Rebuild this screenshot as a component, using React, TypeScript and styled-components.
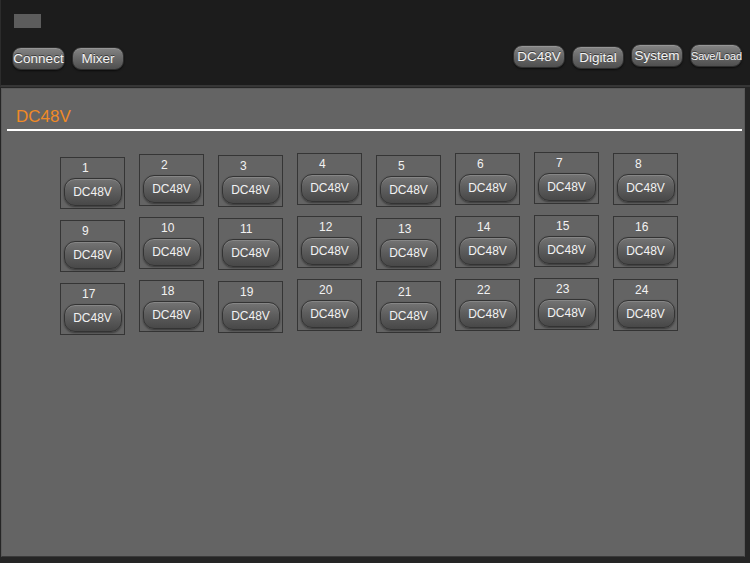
import React from "react";
import styled, { createGlobalStyle } from "styled-components";

const Global = createGlobalStyle`
  html, body { margin: 0; padding: 0; background: #242424; }
  body { font-family: "Liberation Sans", Arial, sans-serif; }
  * { box-sizing: border-box; }
`;

const Screen = styled.div`
  width: 750px;
  height: 563px;
  background: #252525;
  display: flex;
  flex-direction: column;
  overflow: hidden;
`;

const Header = styled.header`
  height: 87px;
  background: #1c1c1c;
  border-left: 1px solid #2c2c2c;
  border-bottom: 2px solid #363636;
  display: flex;
  flex-direction: column;
  padding: 14px 8px 0 11px;
`;

const Badge = styled.div`
  width: 27px;
  height: 14px;
  margin-left: 2px;
  background: #5c5c5c;
`;

const Toolbar = styled.div`
  display: flex;
  align-items: flex-start;
  margin-top: 17px;
`;

const Group = styled.div`
  display: flex;
  gap: 7px;
`;

const Spacer = styled.div`
  flex: 1;
`;

const TopButton = styled.button<{ $dy?: number; $small?: boolean; $w?: number }>`
  width: ${(p) => p.$w ?? 52}px;
  height: 23px;
  margin-top: ${(p) => p.$dy ?? 0}px;
  padding: 0;
  border: 1px solid #2e2e2e;
  border-radius: 9px;
  background: linear-gradient(#858585 0%, #6a6a6a 45%, #4f4f4f 100%);
  box-shadow: 0 1px 2px rgba(0, 0, 0, 0.6), inset 0 1px 0 rgba(255, 255, 255, 0.15);
  color: #f4f4f4;
  font-family: "Liberation Sans", Arial, sans-serif;
  font-size: ${(p) => (p.$small ? 11 : 13.5)}px;
  letter-spacing: ${(p) => (p.$small ? -0.2 : 0)}px;
  text-shadow: 0 -1px 0 rgba(0, 0, 0, 0.5);
  white-space: nowrap;
`;

const Panel = styled.main`
  margin: 1px 5px 0 1px;
  height: 469px;
  background: #646464;
  border: 1px solid #5a5a5a;
  border-bottom: 1px solid #3a3a3a;
  display: flex;
  flex-direction: column;
  padding: 0 2px 0 5px;
`;

const Title = styled.h1`
  margin: 0;
  padding: 18px 0 0 9px;
  height: 42px;
  font-weight: normal;
  font-size: 17px;
  line-height: 20px;
  color: #ef8a26;
  border-bottom: 2px solid #ffffff;
`;

const Grid = styled.div`
  display: grid;
  grid-template-columns: repeat(8, 65px);
  column-gap: 14px;
  row-gap: 6px;
  padding: 21px 0 0 53px;
`;

const Cell = styled.div<{ $dy: number }>`
  width: 65px;
  height: 52px;
  margin-top: ${(p) => p.$dy}px;
  border: 1px solid #353535;
  display: flex;
  flex-direction: column;
  padding: 3px 0 0 0;
`;

const Num = styled.span`
  padding-left: 21px;
  height: 14px;
  font-size: 12px;
  line-height: 14px;
  color: #f2f2f2;
`;

const CellButton = styled.button`
  width: 58px;
  height: 28px;
  margin: 3px auto 0;
  padding: 0;
  border: 1px solid #333;
  border-radius: 11px;
  background: linear-gradient(#747474 0%, #5c5c5c 50%, #484848 100%);
  box-shadow: 0 1px 2px rgba(0, 0, 0, 0.45), inset 0 1px 0 rgba(255, 255, 255, 0.14);
  color: #f2f2f2;
  font-family: "Liberation Sans", Arial, sans-serif;
  font-size: 12px;
`;

const colOffsets = [5, 2, 3, 1, 3, 1, 0, 1];

export default function App() {
  const cells = Array.from({ length: 24 }, (_, i) => i + 1);
  return (
    <Screen>
      <Global />
      <Header>
        <Badge />
        <Toolbar>
          <Group>
            <TopButton $w={53} $dy={2}>Connect</TopButton>
            <TopButton $w={52} $dy={2}>Mixer</TopButton>
          </Group>
          <Spacer />
          <Group>
            <TopButton $dy={0}>DC48V</TopButton>
            <TopButton $dy={1}>Digital</TopButton>
            <TopButton $dy={-1}>System</TopButton>
            <TopButton $dy={-1} $small>Save/Load</TopButton>
          </Group>
        </Toolbar>
      </Header>
      <Panel>
        <Title>DC48V</Title>
        <Grid>
          {cells.map((n) => (
            <Cell key={n} $dy={colOffsets[(n - 1) % 8]}>
              <Num>{n}</Num>
              <CellButton>DC48V</CellButton>
            </Cell>
          ))}
        </Grid>
      </Panel>
    </Screen>
  );
}
